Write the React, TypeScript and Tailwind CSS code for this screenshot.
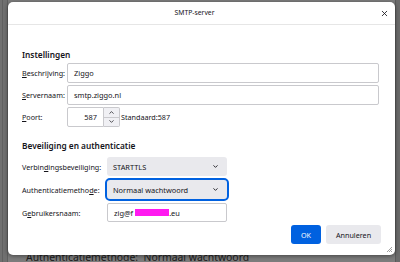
import { ChevronDown, ChevronUp, X } from 'lucide-react';

function Label({ text, hot }: { text: string; hot: number }) {
  return (
    <span className="text-[7.2px] text-[#15141a] whitespace-nowrap">
      {text.slice(0, hot)}
      <span className="underline underline-offset-1">{text[hot]}</span>
      {text.slice(hot + 1)}
    </span>
  );
}

function TextBox({ value, className = '' }: { value: React.ReactNode; className?: string }) {
  return (
    <div
      className={`flex items-center px-[6px] bg-white border border-[#c9c9cd] rounded-[2px] text-[7.4px] text-[#15141a] ${className}`}
    >
      {value}
    </div>
  );
}

function Select({ value, focused = false }: { value: string; focused?: boolean }) {
  return (
    <div
      className={`w-[120px] h-[19px] flex items-center justify-between pl-[6px] pr-[8px] bg-[#e9e9ed] rounded-[3px] text-[7.4px] text-[#15141a] ${
        focused ? 'outline-2 outline-[#0061e0] outline-offset-0' : ''
      }`}
    >
      <span>{value}</span>
      <ChevronDown size={7} strokeWidth={3} className="text-[#15141a]" />
    </div>
  );
}

export default function App() {
  return (
    <div className="relative w-[400px] h-[262px] overflow-hidden bg-[#707070] text-[7.2px] leading-[10px] font-['Noto_Sans','Segoe_UI',sans-serif]">
      {/* dimmed window behind the dialog */}
      <div className="flex h-full">
        <div className="w-[8px] h-full border-r border-[#5f5f5f] flex">
          <div className="w-[3px] h-full border-r border-[#606060]" />
        </div>
        <div className="flex-1 flex flex-col justify-end bg-[#7c7c7c]">
          <div className="h-[10px] pl-[18px] flex items-start text-[10.4px] leading-[10px] text-[#1d1d1d] whitespace-pre">
            Authenticatiemethode:  Normaal wachtwoord
          </div>
        </div>
        <div className="w-[5px] h-full bg-[#6a6a6a] border-l border-[#5a5a5a]" />
      </div>

      {/* dialog */}
      <div className="absolute left-[8px] top-[2px] w-[387px] h-[253px] bg-white rounded-[5px] shadow-[0_1px_4px_rgba(0,0,0,0.45)] flex flex-col">
        <div className="relative h-[23px] shrink-0 border-b border-[#e6e6e6] flex items-center justify-center pr-[14px]">
          <span className="text-[6.8px] text-[#15141a]">SMTP-server</span>
          <X size={9} strokeWidth={2.2} className="absolute right-[6px] top-[7px] text-[#15141a]" />
        </div>

        <div className="flex flex-col pl-[14px] pr-[16px] pt-[22px]">
          <div className="h-[16px] flex items-center text-[8.3px] font-semibold text-[#15141a]">Instellingen</div>

          <div className="flex flex-col gap-[2px]">
            <div className="flex items-center h-[20px]">
              <div className="w-[45px]"><Label text="Beschrijving:" hot={0} /></div>
              <TextBox value="Ziggo" className="flex-1 h-[20px]" />
            </div>
            <div className="flex items-center h-[20px]">
              <div className="w-[45px]"><Label text="Servernaam:" hot={0} /></div>
              <TextBox value="smtp.ziggo.nl" className="flex-1 h-[20px]" />
            </div>
            <div className="flex items-center h-[20px]">
              <div className="w-[45px]"><Label text="Poort:" hot={0} /></div>
              <div className="h-[20px] w-[37px] flex items-center justify-end pr-[6px] border border-[#c9c9cd] rounded-l-[2px] text-[7.4px] text-[#15141a]">
                587
              </div>
              <div className="h-[20px] w-[16px] flex flex-col border border-l-0 border-[#c9c9cd] rounded-r-[2px] bg-[#f0f0f4]">
                <div className="flex-1 flex items-center justify-center border-b border-[#c9c9cd]">
                  <ChevronUp size={7} strokeWidth={2.5} className="text-[#15141a]" />
                </div>
                <div className="flex-1 flex items-center justify-center">
                  <ChevronDown size={7} strokeWidth={2.5} className="text-[#15141a]" />
                </div>
              </div>
              <span className="ml-[1px] text-[#15141a]">Standaard:587</span>
            </div>
          </div>

          <div className="mt-[11px] h-[16px] flex items-center text-[8.3px] font-semibold text-[#15141a]">
            Beveiliging en authenticatie
          </div>

          <div className="mt-[3px] flex flex-col gap-[4px]">
            <div className="flex items-center h-[19px]">
              <div className="w-[85px]"><Label text="Verbindingsbeveiliging:" hot={6} /></div>
              <Select value="STARTTLS" />
            </div>
            <div className="flex items-center h-[19px]">
              <div className="w-[85px]"><Label text="Authenticatiemethode:" hot={18} /></div>
              <Select value="Normaal wachtwoord" focused />
            </div>
            <div className="flex items-center h-[19px]">
              <div className="w-[85px]"><Label text="Gebruikersnaam:" hot={1} /></div>
              <TextBox
                className="w-[120px] h-[19px]"
                value={
                  <span className="flex items-center">
                    zig@f
                    <span className="ml-[2px] w-[34px] h-[7px] bg-[#ff19f0]" />
                    .eu
                  </span>
                }
              />
            </div>
          </div>
        </div>

        <div className="flex justify-end gap-[5px] pr-[14px] pt-[3px]">
          <button className="h-[19px] w-[30px] rounded-[3px] bg-[#0061e0] text-white">OK</button>
          <button className="h-[19px] w-[55px] rounded-[3px] bg-[#e9e9ed] text-[#15141a]">Annuleren</button>
        </div>

        <svg className="absolute right-[2px] bottom-[2px]" width="7" height="7" viewBox="0 0 7 7">
          <path d="M6 1 L1 6 M6 3 L3 6 M6 5 L5 6" stroke="#8a8a8a" strokeWidth="0.8" />
        </svg>
      </div>
    </div>
  );
}
